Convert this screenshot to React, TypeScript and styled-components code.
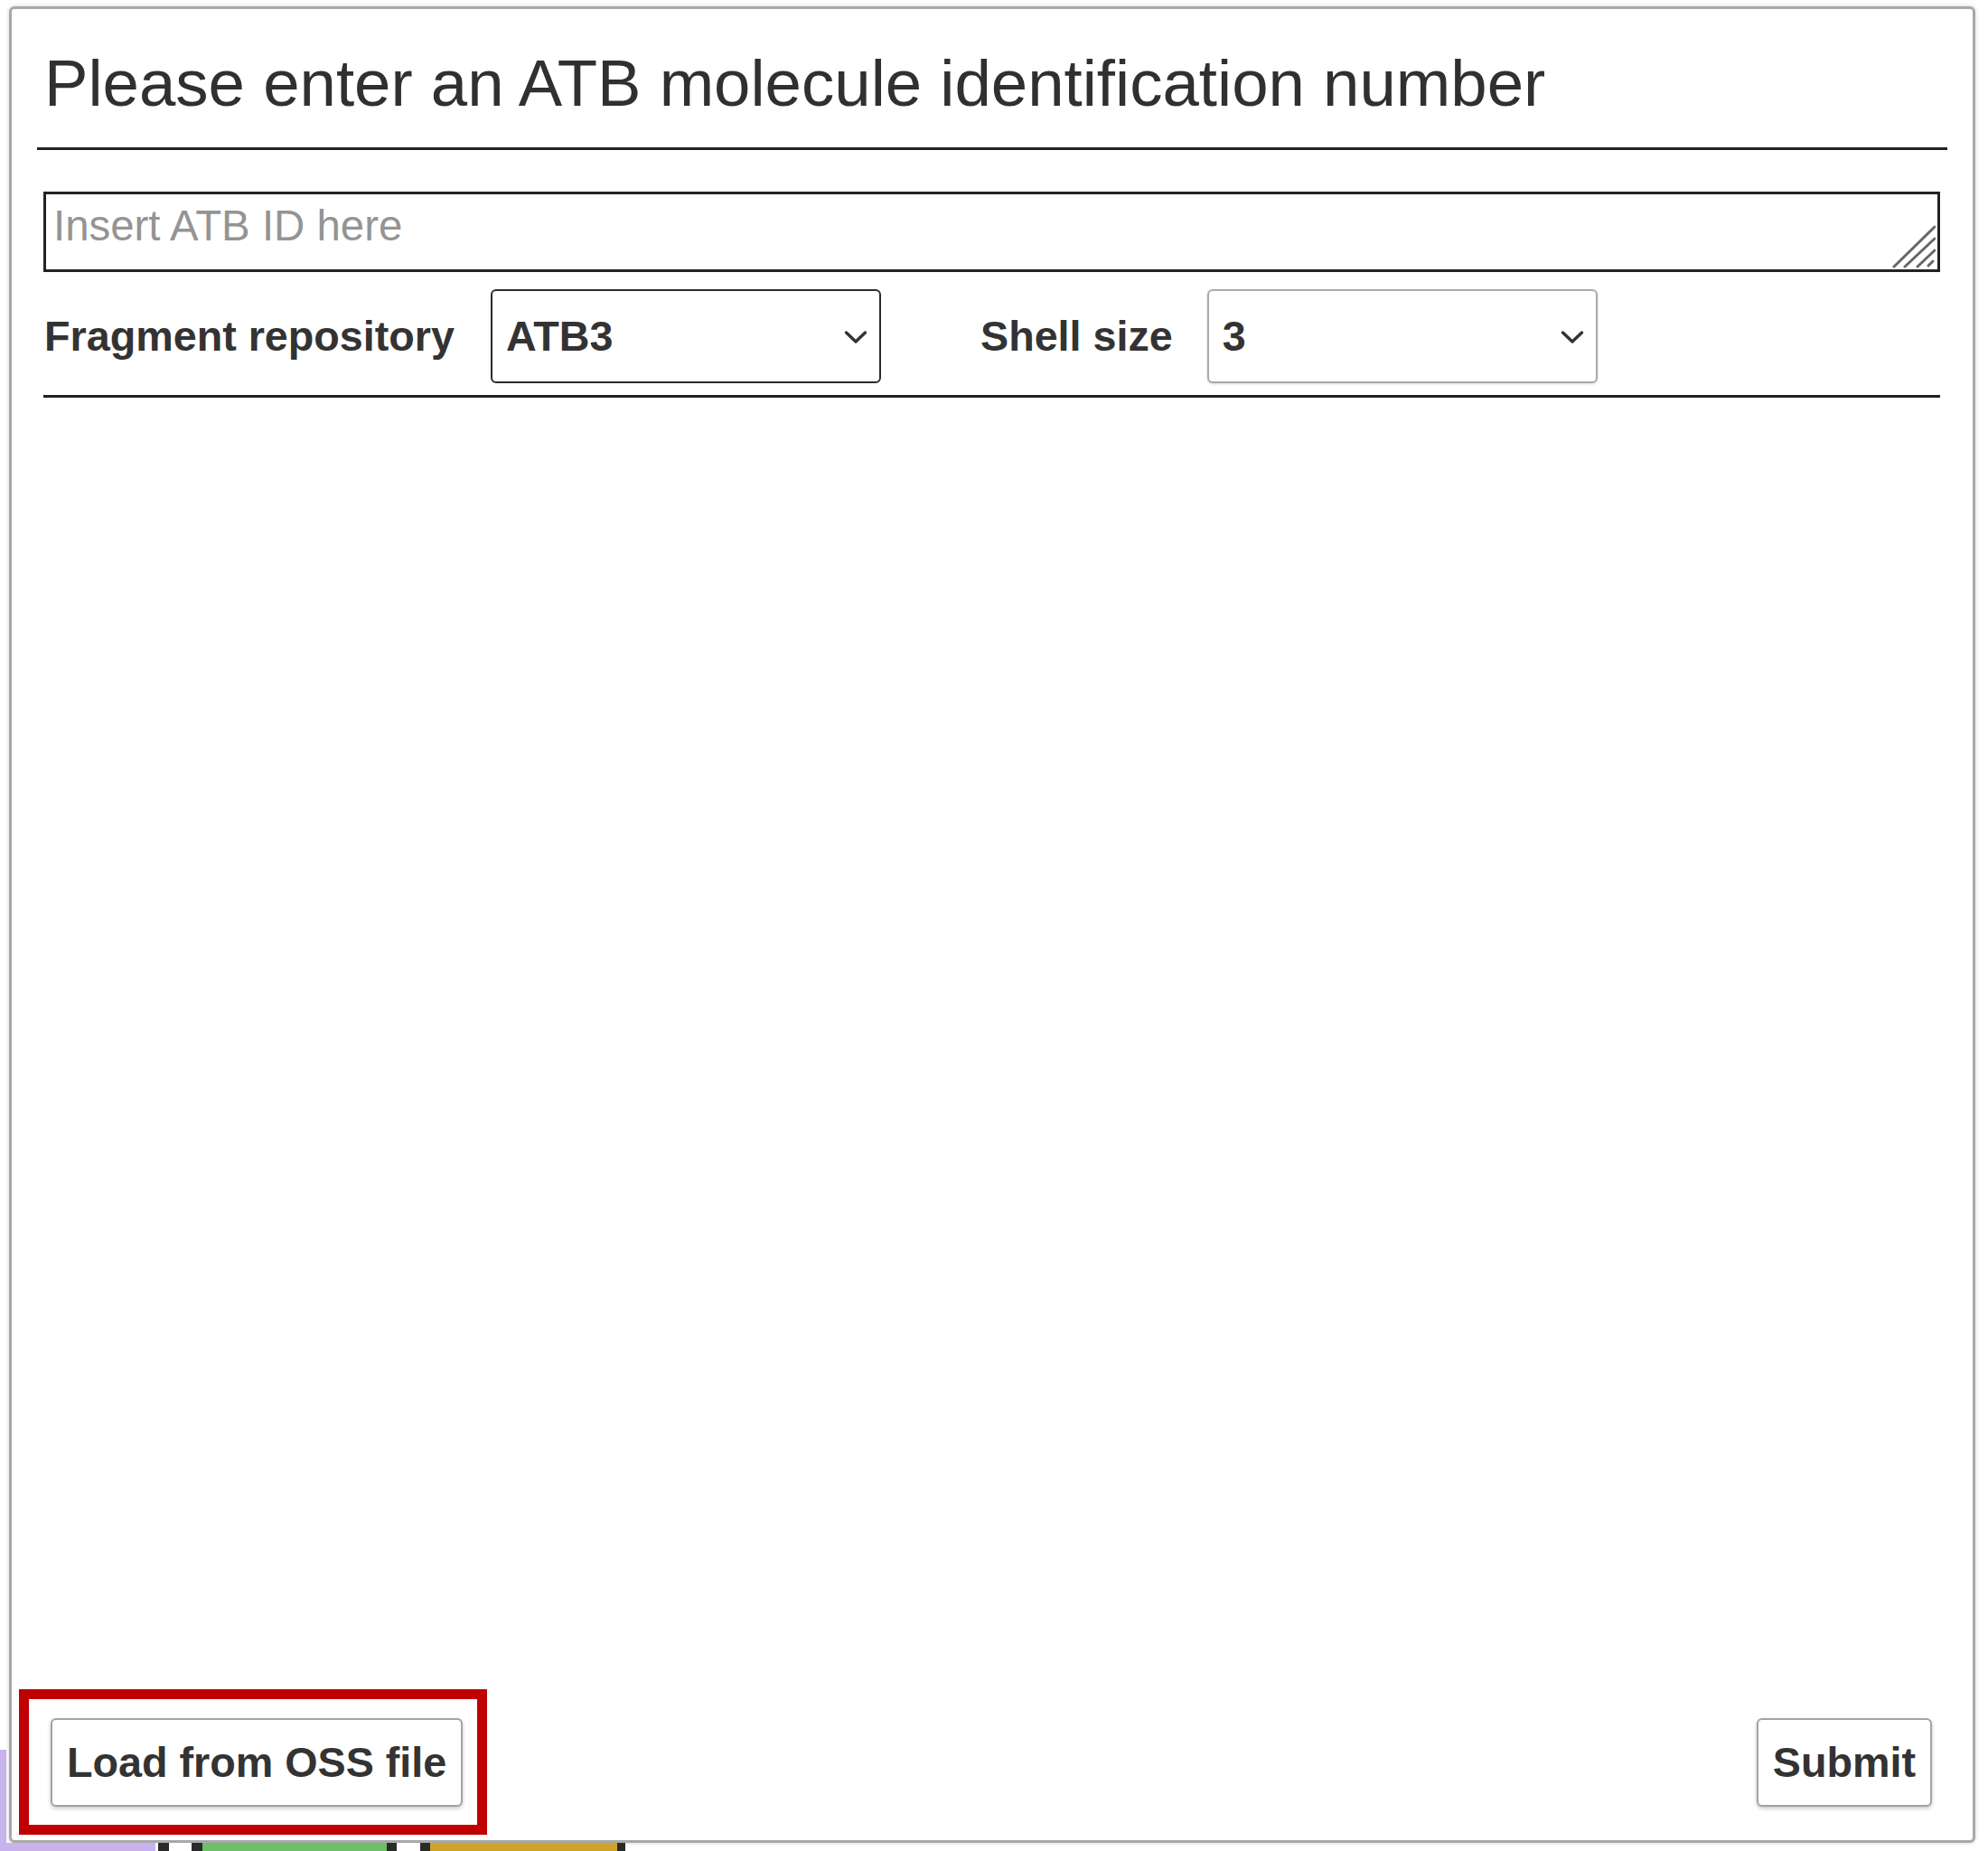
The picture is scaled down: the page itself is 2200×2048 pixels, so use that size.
import React from "react";
import styled, { createGlobalStyle } from "styled-components";

const GlobalStyle = createGlobalStyle`
  html, body {
    margin: 0;
    padding: 0;
    background: #ffffff;
  }
  body {
    font-family: "Liberation Sans", Arial, Helvetica, sans-serif;
    color: #333333;
  }
`;

const Page = styled.div`
  width: 2200px;
  height: 2048px;
  display: flex;
  flex-direction: column;
  padding-top: 7px;
  box-sizing: border-box;
  overflow: hidden;
`;

const Middle = styled.div`
  display: flex;
  flex-direction: row;
`;

const LeftGutter = styled.div`
  width: 10px;
  display: flex;
  flex-direction: column;
  justify-content: flex-end;
`;

const PeekEdge = styled.div<{ $h: number; $color: string }>`
  width: 7px;
  height: ${(p) => p.$h}px;
  background: ${(p) => p.$color};
`;

const Panel = styled.div`
  width: 2176px;
  height: 2032px;
  box-sizing: border-box;
  border: 3px solid #a8a8a8;
  border-radius: 6px;
  box-shadow: 0 0 5px rgba(0, 0, 0, 0.18);
  background: #ffffff;
  display: flex;
  flex-direction: column;
`;

const Header = styled.div`
  margin: 0 28px;
  padding-top: 42px;
  padding-bottom: 32px;
  border-bottom: 3px solid #222222;
`;

const Title = styled.h1`
  margin: 0;
  padding-left: 8px;
  font-size: 72.6px;
  line-height: 79px;
  font-weight: 400;
  color: #303030;
  white-space: nowrap;
`;

const Body = styled.div`
  margin: 46px 36px 0 35px;
  display: flex;
  flex-direction: column;
`;

const AreaWrap = styled.div`
  position: relative;
  height: 89px;
`;

const IdArea = styled.textarea`
  width: 100%;
  height: 89px;
  box-sizing: border-box;
  border: 3px solid #222222;
  border-radius: 0;
  padding: 7px 8px;
  margin: 0;
  font-family: "Liberation Sans", Arial, sans-serif;
  font-size: 47.4px;
  line-height: normal;
  color: #333333;
  resize: none;
  outline: none;
  display: block;
  &::placeholder {
    color: #949494;
  }
`;

const Grip = styled.svg`
  position: absolute;
  right: 5px;
  bottom: 4px;
  width: 48px;
  height: 48px;
  pointer-events: none;
`;

const OptionsRow = styled.div`
  margin-top: 19px;
  height: 104px;
  padding-bottom: 13px;
  border-bottom: 3px solid #222222;
  display: flex;
  align-items: center;
`;

const FieldLabel = styled.label<{ $ml: number; $mr: number }>`
  margin-left: ${(p) => p.$ml}px;
  margin-right: ${(p) => p.$mr}px;
  font-size: 46.7px;
  font-weight: 700;
  color: #333333;
  white-space: nowrap;
`;

const SelectWrap = styled.div`
  position: relative;
  width: 432px;
  height: 104px;
`;

const Select = styled.select<{ $focused?: boolean }>`
  appearance: none;
  -webkit-appearance: none;
  width: 100%;
  height: 100%;
  box-sizing: border-box;
  border: ${(p) => (p.$focused ? "2.5px solid #2b2b2b" : "2px solid #a9a9a9")};
  border-radius: 6px;
  box-shadow: ${(p) => (p.$focused ? "none" : "0 1px 3px rgba(0,0,0,0.15)")};
  background: #ffffff;
  padding: 0 0 0 15px;
  margin: 0;
  font-family: "Liberation Sans", Arial, sans-serif;
  font-size: 46.7px;
  font-weight: 700;
  color: #333333;
  outline: none;
`;

const Chevron = styled.svg`
  position: absolute;
  right: 15px;
  top: 50%;
  width: 26px;
  height: 16px;
  margin-top: -7px;
  pointer-events: none;
`;

const Spacer = styled.div`
  flex: 1;
`;

const Footer = styled.div`
  display: flex;
  justify-content: space-between;
  align-items: center;
  padding: 0 45px 6px 8px;
`;

const Highlight = styled.div`
  border: 11px solid #c00000;
  padding: 21px 16px 20px 24px;
  display: flex;
`;

const ActionButton = styled.button`
  height: 98px;
  box-sizing: border-box;
  padding: 0 16px;
  border: 2px solid #a3a3a3;
  border-radius: 6px;
  background: #ffffff;
  box-shadow: 0 2px 4px rgba(0, 0, 0, 0.22);
  font-family: "Liberation Sans", Arial, sans-serif;
  font-size: 46.7px;
  font-weight: 700;
  color: #333333;
  white-space: nowrap;
  cursor: pointer;
`;

const UnderStrip = styled.div`
  height: 9px;
  display: flex;
  flex-direction: row;
`;

const Seg = styled.div<{ $w: number; $color: string }>`
  width: ${(p) => p.$w}px;
  height: 100%;
  background: ${(p) => p.$color};
  flex: none;
`;

const stripSegments: { w: number; c: string }[] = [
  { w: 172, c: "#c9b3ee" },
  { w: 3, c: "#ffffff" },
  { w: 12, c: "#2a2a2a" },
  { w: 25, c: "#ffffff" },
  { w: 12, c: "#2a2a2a" },
  { w: 204, c: "#6cc06a" },
  { w: 11, c: "#2a2a2a" },
  { w: 26, c: "#ffffff" },
  { w: 11, c: "#2a2a2a" },
  { w: 207, c: "#d1a22a" },
  { w: 9, c: "#2a2a2a" },
];

const ChevronIcon = () => (
  <Chevron viewBox="0 0 26 16">
    <polyline
      points="2.5,3 13,13 23.5,3"
      fill="none"
      stroke="#333"
      strokeWidth="3.4"
      strokeLinecap="round"
      strokeLinejoin="round"
    />
  </Chevron>
);

export default function App() {
  return (
    <>
      <GlobalStyle />
      <Page>
        <Middle>
          <LeftGutter>
            <PeekEdge $h={103} $color="#c9b3ee" />
          </LeftGutter>
          <Panel>
            <Header>
              <Title>Please enter an ATB molecule identification number</Title>
            </Header>
            <Body>
              <AreaWrap>
                <IdArea placeholder="Insert ATB ID here" />
                <Grip viewBox="0 0 48 48">
                  <g stroke="#666" strokeWidth="3" strokeLinecap="round">
                    <line x1="2" y1="46" x2="47" y2="2" />
                    <line x1="14" y1="46" x2="47" y2="15" />
                    <line x1="28" y1="46" x2="47" y2="28" />
                    <line x1="40" y1="45" x2="45" y2="40" />
                  </g>
                </Grip>
              </AreaWrap>
              <OptionsRow>
                <FieldLabel $ml={1} $mr={40}>Fragment repository</FieldLabel>
                <SelectWrap>
                  <Select $focused defaultValue="ATB3">
                    <option value="ATB3">ATB3</option>
                    <option value="ATB2">ATB2</option>
                  </Select>
                  <ChevronIcon />
                </SelectWrap>
                <FieldLabel $ml={110} $mr={38}>Shell size</FieldLabel>
                <SelectWrap>
                  <Select defaultValue="3">
                    <option value="1">1</option>
                    <option value="2">2</option>
                    <option value="3">3</option>
                    <option value="4">4</option>
                  </Select>
                  <ChevronIcon />
                </SelectWrap>
              </OptionsRow>
            </Body>
            <Spacer />
            <Footer>
              <Highlight>
                <ActionButton>Load from OSS file</ActionButton>
              </Highlight>
              <ActionButton>Submit</ActionButton>
            </Footer>
          </Panel>
        </Middle>
        <UnderStrip>
          {stripSegments.map((s, i) => (
            <Seg key={i} $w={s.w} $color={s.c} />
          ))}
        </UnderStrip>
      </Page>
    </>
  );
}
